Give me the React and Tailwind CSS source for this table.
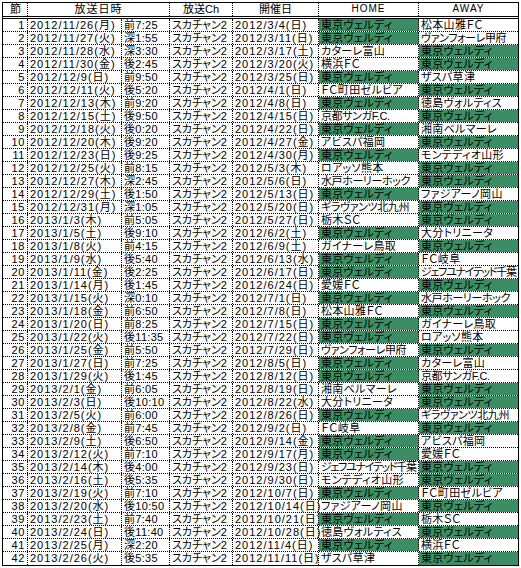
const G = "東京ヴェルディ";

const rows = [
  ["2012/11/26(月)", "前7:25", "2012/3/4(日)", G, "松本山雅ＦＣ"],
  ["2012/11/27(火)", "深1:55", "2012/3/11(日)", G, "ヴァンフォーレ甲府"],
  ["2012/11/28(水)", "深3:30", "2012/3/17(土)", "カターレ富山", G],
  ["2012/11/30(金)", "後2:45", "2012/3/20(火)", "横浜ＦＣ", G],
  ["2012/12/9(日)", "前9:50", "2012/3/25(日)", G, "ザスパ草津"],
  ["2012/12/11(火)", "後5:20", "2012/4/1(日)", "ＦＣ町田ゼルビア", G],
  ["2012/12/13(木)", "前9:20", "2012/4/8(日)", G, "徳島ヴォルティス"],
  ["2012/12/15(土)", "後9:50", "2012/4/15(日)", "京都サンガF.C.", G],
  ["2012/12/18(火)", "後0:20", "2012/4/22(日)", G, "湘南ベルマーレ"],
  ["2012/12/20(木)", "後9:20", "2012/4/27(金)", "アビスパ福岡", G],
  ["2012/12/23(日)", "後9:25", "2012/4/30(月)", G, "モンテディオ山形"],
  ["2012/12/25(火)", "前8:15", "2012/5/3(木)", "ロアッソ熊本", G],
  ["2012/12/27(木)", "深2:45", "2012/5/6(日)", "水戸ホーリーホック", G],
  ["2012/12/29(土)", "後1:50", "2012/5/13(日)", G, "ファジアーノ岡山"],
  ["2012/12/31(月)", "深1:05", "2012/5/20(日)", "ギラヴァンツ北九州", G],
  ["2013/1/3(木)", "前5:05", "2012/5/27(日)", "栃木ＳＣ", G],
  ["2013/1/5(土)", "後9:10", "2012/6/2(土)", G, "大分トリニータ"],
  ["2013/1/8(火)", "前4:15", "2012/6/9(土)", "ガイナーレ鳥取", G],
  ["2013/1/9(水)", "後5:40", "2012/6/13(水)", G, "ＦＣ岐阜"],
  ["2013/1/11(金)", "後2:25", "2012/6/17(日)", G, "ジェフユナイテッド千葉"],
  ["2013/1/14(月)", "後1:45", "2012/6/24(日)", "愛媛ＦＣ", G],
  ["2013/1/15(火)", "深0:10", "2012/7/1(日)", G, "水戸ホーリーホック"],
  ["2013/1/18(金)", "前6:50", "2012/7/8(日)", "松本山雅ＦＣ", G],
  ["2013/1/20(日)", "前8:25", "2012/7/15(日)", G, "ガイナーレ鳥取"],
  ["2013/1/22(火)", "後11:35", "2012/7/22(日)", G, "ロアッソ熊本"],
  ["2013/1/25(金)", "前5:50", "2012/7/29(日)", "ヴァンフォーレ甲府", G],
  ["2013/1/27(日)", "前7:25", "2012/8/5(日)", G, "カターレ富山"],
  ["2013/1/29(火)", "後1:45", "2012/8/12(日)", G, "京都サンガF.C."],
  ["2013/2/1(金)", "前6:05", "2012/8/19(日)", "湘南ベルマーレ", G],
  ["2013/2/3(日)", "後10:10", "2012/8/22(水)", "大分トリニータ", G],
  ["2013/2/5(火)", "前6:00", "2012/8/26(日)", G, "ギラヴァンツ北九州"],
  ["2013/2/8(金)", "前7:45", "2012/9/2(日)", "ＦＣ岐阜", G],
  ["2013/2/9(土)", "後6:50", "2012/9/14(金)", G, "アビスパ福岡"],
  ["2013/2/12(火)", "前7:10", "2012/9/17(月)", G, "愛媛ＦＣ"],
  ["2013/2/14(木)", "後4:00", "2012/9/23(日)", "ジェフユナイテッド千葉", G],
  ["2013/2/16(土)", "後5:35", "2012/9/30(日)", "モンテディオ山形", G],
  ["2013/2/19(火)", "前7:10", "2012/10/7(日)", G, "ＦＣ町田ゼルビア"],
  ["2013/2/20(水)", "後10:50", "2012/10/14(日)", "ファジアーノ岡山", G],
  ["2013/2/23(土)", "前7:40", "2012/10/21(日)", G, "栃木ＳＣ"],
  ["2013/2/24(日)", "後11:40", "2012/10/28(日)", "徳島ヴォルティス", G],
  ["2013/2/25(月)", "深2:20", "2012/11/4(日)", G, "横浜ＦＣ"],
  ["2013/2/26(火)", "後5:35", "2012/11/11(日)", "ザスパ草津", G],
];

const cell = "h-full shrink-0 border-r border-dotted border-black whitespace-nowrap";

function Team({ name, last }) {
  const green = name === G;
  const spacing =
    name.length >= 11 ? "tracking-[-1.3px]" : name.length >= 9 ? "tracking-[-0.4px]" : "tracking-[0.3px]";
  return (
    <div
      className={`h-full whitespace-nowrap pl-[2px] ${spacing} ${
        last ? "flex-1" : "w-[100px] shrink-0 border-r border-dotted border-black"
      } ${green ? "bg-[#3b8d64]" : ""}`}
    >
      {name}
    </div>
  );
}

export default function App() {
  return (
    <div className="min-h-[568px] bg-white pt-[2px] pl-[2px]">
      <div className="w-[517px] border border-black text-[11px] leading-[12px] text-black font-['Liberation_Sans','Noto_Sans_CJK_JP',sans-serif] [font-feature-settings:'palt']">
        {/* header */}
        <div className="flex h-[16px] border-b-[3px] border-double border-black">
          <div className={`${cell} w-[25px] pl-[7px]`}>節</div>
          <div className={`${cell} w-[142px] text-center tracking-[1px]`}>放送日時</div>
          <div className={`${cell} w-[63px] text-center`}>放送Ch</div>
          <div className={`${cell} w-[86px] text-center`}>開催日</div>
          <div className={`${cell} w-[100px] text-center text-[10px] tracking-[1px]`}>HOME</div>
          <div className="h-full flex-1 text-center text-[10px] tracking-[1px]">AWAY</div>
        </div>

        {rows.map(([date, time, day, home, away], i) => (
          <div
            key={i}
            className={`flex h-[13px] ${i < rows.length - 1 ? "border-b border-dotted border-black" : ""}`}
          >
            <div className={`${cell} w-[25px] pr-[2px] text-right tracking-[0.6px]`}>{i + 1}</div>
            <div className={`${cell} w-[94px] pl-[2px] tracking-[1px]`}>{date}</div>
            <div className={`${cell} w-[48px] pl-[2px] tracking-[0.3px]`}>{time}</div>
            <div className={`${cell} w-[63px] pl-[2px]`}>スカチャン2</div>
            <div className={`${cell} w-[86px] pl-[2px] ${day.length > 13 ? "tracking-[-0.2px]" : "tracking-[1px]"}`}>{day}</div>
            <Team name={home} />
            <Team name={away} last />
          </div>
        ))}
      </div>
    </div>
  );
}
